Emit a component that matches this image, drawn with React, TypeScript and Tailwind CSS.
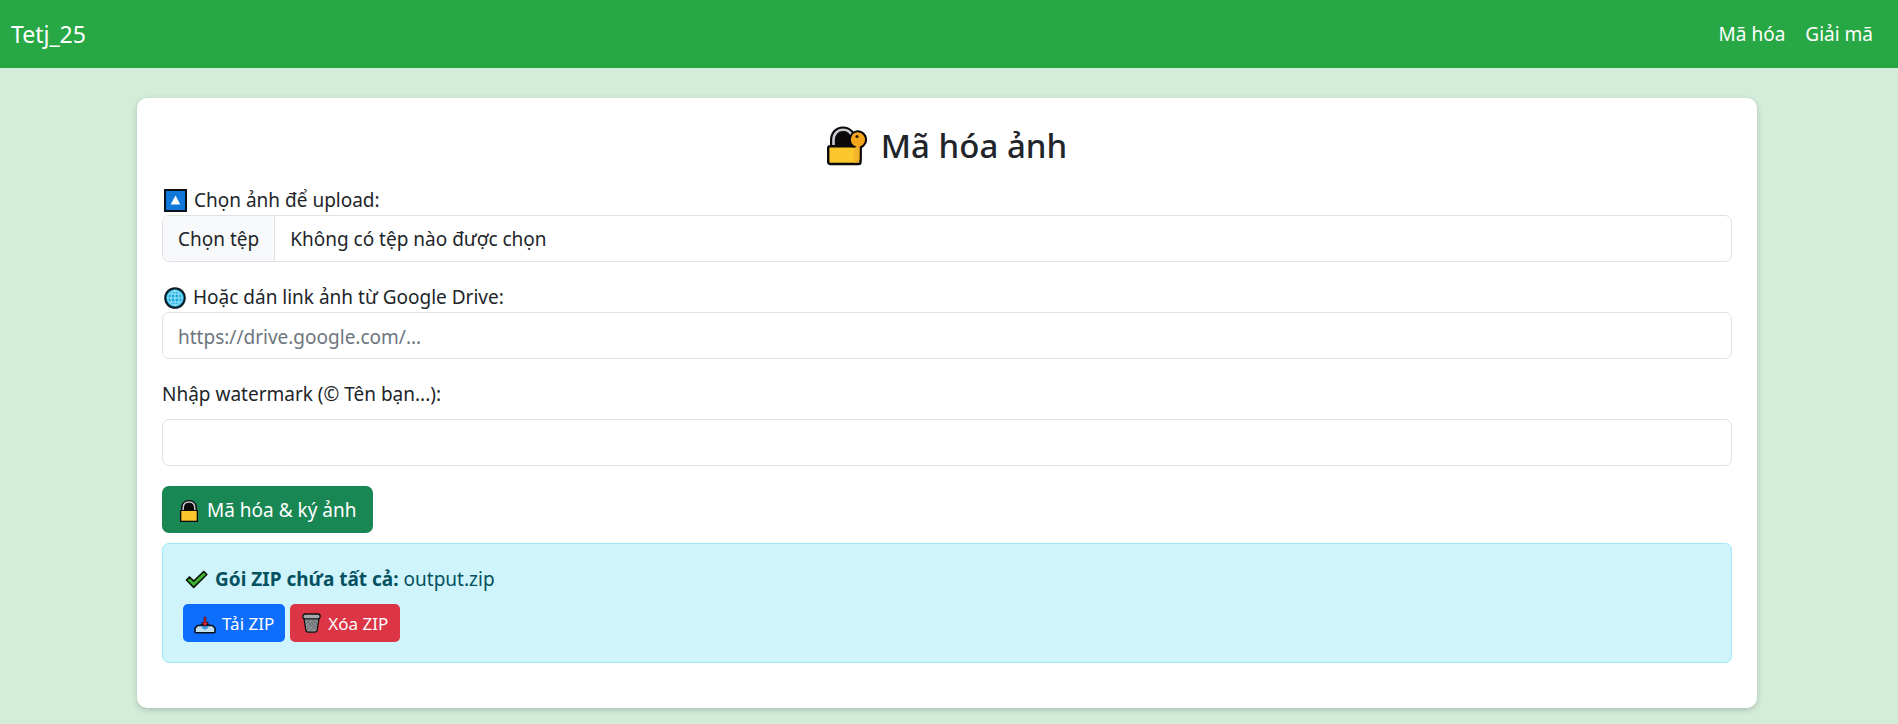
import { useState } from "react";

type IconProps = { className?: string };

function LockKeyIcon({ className }: IconProps) {
  return (
    <svg viewBox="0 0 40 40" className={className} aria-hidden="true">
      <path d="M3 21V14C3 6 8.500 .5 16 .5S29 6 29 14v7z" fill="#0b0909" />
      <path d="M6.500 20v-5.500C6.500 8 10.500 3.800 16 3.800c4.600 0 8 2.600 9 7" fill="none" stroke="#c9cbd1" strokeWidth="2.600" />
      <rect x="1.200" y="20.200" width="32.300" height="17.800" rx="2" fill="#fcc62d" stroke="#0b0909" strokeWidth="2.400" />
      <path d="M30.500 5.300a8.300 8.300 0 0 1 3.300 16l-.3 13-2.500 2.200-2.800-2.500V21.300a8.300 8.300 0 0 1 2.300-16z" fill="#f3a51c" stroke="#0b0909" strokeWidth="2" strokeLinejoin="round" />
      <path d="M27 21.400h5.300v15.400H27z" fill="#efb02a" />
      <path d="M29 22v12" stroke="#f8bd33" strokeWidth="1.500" />
      <circle cx="30" cy="10.500" r="1.600" fill="#2b1a05" />
    </svg>
  );
}

function UpIcon({ className }: IconProps) {
  return (
    <svg viewBox="0 0 23 23" className={className} aria-hidden="true">
      <rect x="1" y="1" width="21" height="21" fill="#0f78d8" stroke="#07111d" strokeWidth="2" />
      <path d="M11.500 6.500 16.300 15.500h-9.600z" fill="#fff" />
    </svg>
  );
}

function GlobeIcon({ className }: IconProps) {
  return (
    <svg viewBox="0 0 22 22" className={className} aria-hidden="true">
      <circle cx="11" cy="11" r="9.800" fill="#18a9dc" stroke="#0a1a22" strokeWidth="2" />
      <g fill="none" stroke="#a5e8f9" strokeWidth="1">
        <ellipse cx="11" cy="11" rx="4" ry="7.500" />
        <circle cx="11" cy="11" r="7.300" />
        <path d="M11 3.500v15M3.500 11h15M4.800 7h12.400M4.800 15h12.400" />
      </g>
    </svg>
  );
}

function LockIcon({ className }: IconProps) {
  return (
    <svg viewBox="0 0 20 24" className={className} aria-hidden="true">
      <path d="M2 11V9C2 4 5.500 1 10 1s8 3 8 8v2h1v12H1V11z" fill="#0b0909" />
      <path d="M4.200 11V9c0-4 2.400-6 5.800-6s5.800 2 5.800 6v2" fill="none" stroke="#c9cbd1" strokeWidth="1.500" />
      <rect x="2.300" y="12" width="15.400" height="9.700" fill="#fcc62d" />
    </svg>
  );
}

function CheckIcon({ className }: IconProps) {
  return (
    <svg viewBox="0 0 23 19" className={className} aria-hidden="true">
      <path d="M1.500 10 4.500 7l4.200 4.200L18.800 1.500l3 3L8.700 17.300z" fill="#3fb52e" stroke="#0b1a0a" strokeWidth="1.700" strokeLinejoin="round" />
    </svg>
  );
}

function DownloadIcon({ className }: IconProps) {
  return (
    <svg viewBox="0 0 22 18" className={className} aria-hidden="true">
      <path d="M3.500 9.500h15l2.500 2.700v3.600q0 1-1 1H2q-1 0-1-1v-3.600z" fill="#c3dff0" stroke="#0a0f1c" strokeWidth="1.600" strokeLinejoin="round" />
      <path d="M11 4.500 17 10H5z" fill="#111a33" />
      <path d="M7.500 10h7q-.5 3.500-3.500 3.500T7.500 10z" fill="#3c9fdf" />
      <path d="M10 1h2v5.500h2.300L11 10.500 7.700 6.500H10z" fill="#d3222e" stroke="#3a0d1c" strokeWidth=".6" strokeLinejoin="round" />
    </svg>
  );
}

function TrashIcon({ className }: IconProps) {
  return (
    <svg viewBox="0 0 19 20" className={className} aria-hidden="true">
      <path d="M1.800 4 3.800 17q.3 2.200 2.500 2.200h6.400q2.200 0 2.500-2.200l2-13z" fill="#8d9294" stroke="#111" strokeWidth="1.300" />
      <path d="m4 7 10 10M7 7l8 8M11 7l4 4M15 7 5 17M12 7l-7.500 7.500M8 7l-4 4M15 11l-7 7" stroke="#5c6163" strokeWidth=".7" />
      <rect x=".8" y="1" width="17.400" height="4.800" rx="2.400" fill="#a4a8aa" stroke="#111" strokeWidth="1.300" />
    </svg>
  );
}

const fieldClass =
  "block h-[47px] w-full rounded-[7px] border border-[#dee2e6] bg-white px-[15px] pt-0.5 text-[19px] text-[#212529] placeholder:text-[#6c757d]";

export default function App() {
  const [fileName, setFileName] = useState("");

  return (
    <div className="min-h-screen bg-[#d4edda] font-['Noto_Sans',sans-serif] text-[19px] leading-[29px] text-[#212529]">
      <nav className="flex h-[68px] items-center justify-between bg-[#28a745] pl-[11px] pr-[25px] text-white">
        <a href="#" className="text-[23px]">Tetj_25</a>
        <div className="flex gap-5">
          <a href="#encode">Mã hóa</a>
          <a href="#decode">Giải mã</a>
        </div>
      </nav>

      <main className="pr-1 pt-[30px]">
        <section className="mx-auto max-w-[1620px] rounded-[10px] bg-white px-[25px] pb-[45px] pt-6 shadow-[0_2px_6px_rgba(0,0,0,0.2)]">
          <h2 className="mb-[17px] flex h-[47px] items-center justify-center gap-[14px] text-[33px] font-medium">
            <LockKeyIcon className="size-10" />
            Mã hóa ảnh
          </h2>

          <form onSubmit={(e) => e.preventDefault()}>
            <div className="mb-[21px]">
              <label htmlFor="file" className="flex items-center gap-[7px] pl-0.5">
                <UpIcon className="size-[23px]" />
                Chọn ảnh để upload:
              </label>
              <input
                id="file"
                type="file"
                accept="image/*"
                className="peer sr-only"
                onChange={(e) => setFileName(e.target.files?.[0]?.name ?? "")}
              />
              <label
                htmlFor="file"
                className="flex h-[47px] cursor-pointer items-stretch overflow-hidden rounded-[7px] border border-[#dee2e6] peer-focus-visible:border-[#86b7fe]"
              >
                <span className="flex items-center border-r border-[#dee2e6] bg-[#f8f9fa] px-[15px] pt-0.5">Chọn tệp</span>
                <span className="flex items-center px-[15px] pt-0.5">{fileName || "Không có tệp nào được chọn"}</span>
              </label>
            </div>

            <div className="mb-[21px]">
              <label htmlFor="link" className="flex items-center gap-[7px] pl-0.5">
                <GlobeIcon className="size-[22px]" />
                Hoặc dán link ảnh từ Google Drive:
              </label>
              <input id="link" type="url" placeholder="https://drive.google.com/..." className={fieldClass} />
            </div>

            <div className="mb-5">
              <label htmlFor="watermark" className="mb-[10px] block">Nhập watermark (© Tên bạn...):</label>
              <input id="watermark" type="text" className={fieldClass} />
            </div>

            <button type="submit" className="flex h-[47px] items-center gap-2 rounded-[7px] bg-[#198754] px-[17px] pt-0.5 text-white">
              <LockIcon className="h-6 w-5" />
              Mã hóa &amp; ký ảnh
            </button>
          </form>

          <div className="mt-[10px] rounded-[7px] border border-[#9eeaf9] bg-[#cff4fc] p-5 text-[#055160]">
            <p className="mb-[10px] flex h-[30px] items-center pl-0.5">
              <CheckIcon className="mr-[7px] h-[19px] w-[23px]" />
              <strong className="mr-[5px] font-bold">Gói ZIP chứa tất cả:</strong>
              output.zip
            </p>
            <div className="flex gap-[5px] text-[17px] text-white">
              <button type="button" className="flex h-[38px] items-center gap-1.5 rounded-[5px] bg-[#0d6efd] px-[11px]">
                <DownloadIcon className="mt-1 h-[18px] w-[22px]" />
                Tải ZIP
              </button>
              <button type="button" className="flex h-[38px] items-center gap-[7px] rounded-[5px] bg-[#dc3545] px-3">
                <TrashIcon className="h-5 w-[19px]" />
                Xóa ZIP
              </button>
            </div>
          </div>
        </section>
      </main>
    </div>
  );
}
